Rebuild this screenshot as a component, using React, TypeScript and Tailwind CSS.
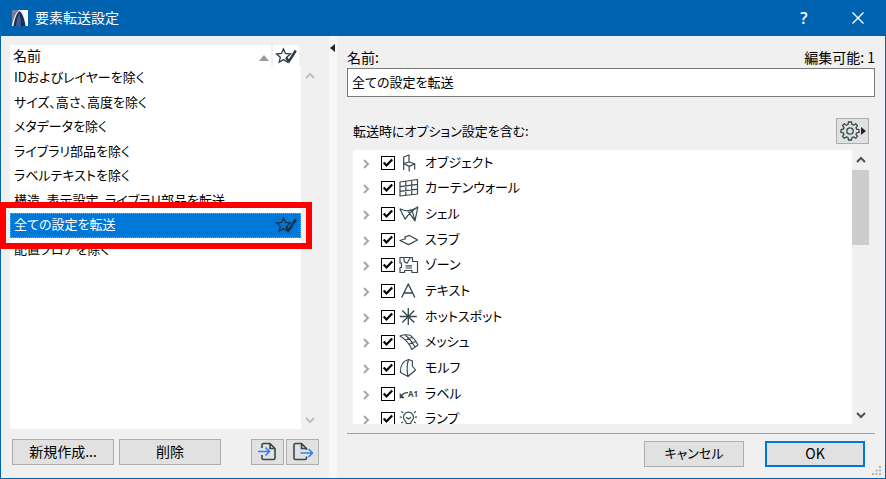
import type { ReactNode } from "react";

const settings = [
  "IDおよびレイヤーを除く",
  "サイズ、高さ、高度を除く",
  "メタデータを除く",
  "ライブラリ部品を除く",
  "ラベルテキストを除く",
  "構造、表示設定、ライブラリ部品を転送",
  "全ての設定を転送",
  "配置フロアを除く",
];

const SELECTED = 6;

const elements: { name: string; icon: ReactNode }[] = [
  {
    name: "オブジェクト",
    icon: (
      <path d="M4.700 10.500V4L10 2V9M4.700 10.500 10 9 15.700 10.800 10.200 13.400ZM4.700 10.500V17M10.200 13.400V18.500M15.700 10.800V16.500" />
    ),
  },
  {
    name: "カーテンウォール",
    icon: <path d="M1 4 18.500 1.500V16L1 18ZM6.800 3.200V17.300M12.700 2.300V16.600M1 8.700 18.500 6.400M1 13.400 18.500 11.200" />,
  },
  {
    name: "シェル",
    icon: <path d="M.8 4.800Q10 9.500 18.800 3L16 16.800 9.500 7.800M.8 4.800 6.200 15.200Q10 8.500 18.800 3M13.200 6.500 16 16.800" />,
  },
  {
    name: "スラブ",
    icon: <path d="M1 10.500 6.500 8.800 5.800 7 10.500 5.400 18.500 10 9.500 14.600Z" />,
  },
  {
    name: "ゾーン",
    icon: (
      <path d="M1 2.500H5V5.500Q5.500 7.500 8 8.200L11.500 2.500H13.500V6.500H18.500V17.500H13V15.500H5.500V17.500H1V12.500H2.500V8H1ZM5 2.500H11.500M6.500 10.800H13M6.500 13H13" />
    ),
  },
  {
    name: "テキスト",
    icon: <path d="M2.700 16.500 9.300 3 15.800 16.500M5 12H13.600" strokeWidth="1.400" />,
  },
  {
    name: "ホットスポット",
    icon: <path d="M.8 9.500H17.800M9.300 1V18M3.300 3.500 15.300 15.500M15.300 3.500 3.300 15.500" strokeWidth="1.300" />,
  },
  {
    name: "メッシュ",
    icon: (
      <path
        d="M1 4Q6 2 11.500 3.300Q17 8 19 13L12.800 17.500Q9.500 9 1 4ZM6 3Q12 7.500 16 15.200M6.500 8.500Q10 5 14.500 6M10 12.500Q13 9.500 17.300 9.700"
        strokeWidth="1.100"
      />
    ),
  },
  {
    name: "モルフ",
    icon: <path d="M9.500 1.500Q1 3.500 1.500 14.500L9 18.500Q7 9 9.500 1.500L13.500 3 13.300 8 16.500 12 9 18.500" />,
  },
  {
    name: "ラベル",
    icon: (
      <>
        <path d="M2 12.500Q4.500 8.500 9 8.700" strokeWidth="1.300" />
        <path d="M.7 14.200V8.800L5.800 14.200Z" fill="currentColor" stroke="none" />
        <text x="9" y="13.200" fontSize="8" fontWeight="700" fill="currentColor" stroke="none">
          A1
        </text>
      </>
    ),
  },
  {
    name: "ランプ",
    icon: (
      <path d="M7.300 14.500Q7.300 12.800 6 11.700A5 5 0 1 1 13 11.700Q11.700 12.800 11.700 14.500ZM7.500 16.800H11.500M7 8.200 9.500 10 12 8.200M.8 8.200H2.800M16 8.200H18M2.300 2.500 4 3.800M16.700 2.500 15 3.800M2.300 14 4 12.800M16.700 14 15 12.800" />
    ),
  },
];

function StarCheck({ className = "" }: { className?: string }) {
  return (
    <svg viewBox="0 0 22 18" className={`h-[18px] w-[22px] ${className}`} fill="none" stroke="currentColor">
      <path d="M8.500 2 10.400 6.500 15.500 7 11.700 10.300 12.700 15.200 8.500 12.600 4.200 15.200 5.300 10.300 1.500 7 6.500 6.500Z" strokeWidth="1.300" />
      <path d="M11 10.500 14 14.200 20.800 3.500" strokeWidth="2.400" />
    </svg>
  );
}

function Chevron({ d, className = "" }: { d: string; className?: string }) {
  return (
    <svg viewBox="0 0 10 10" className={`size-[10px] ${className}`} fill="none" stroke="currentColor" strokeWidth="2">
      <path d={d} />
    </svg>
  );
}

const UP = "M1 7 5 3 9 7";
const DOWN = "M1 3 5 7 9 3";
const RIGHT = "M3 1 7 5 3 9";

const button = "flex items-center justify-center border border-[#adadad] bg-[#e1e1e1]";

export default function App() {
  return (
    <div className="flex h-screen flex-col border border-t-0 border-[#0063b1] bg-[#f0f0f0] font-['Noto_Sans_CJK_JP',sans-serif] text-sm leading-5 text-black [font-feature-settings:'palt']">
      <header className="flex h-9 shrink-0 items-center bg-[#0063b1] pr-[21px] pl-[11px] text-white">
        <svg viewBox="0 0 16 16" className="mr-[7px] size-4">
          <rect width="16" height="16" fill="#f4f6fa" />
          <path d="M0 0H7C3.500 3 1.500 8 0 15Z" fill="#6f7f9f" />
          <path d="M1.500 16C2.500 9 4.500 3 7.500 1C10.500 3 12.500 9 13.500 16Z" fill="#1c2c58" />
          <path d="M4 16C4.500 10 5.500 6 7.300 3.500C8.500 7 9 11 9 16Z" fill="#46598a" />
        </svg>
        <h1 className="pb-[2px]">要素転送設定</h1>
        <button aria-label="ヘルプ" className="mr-10 ml-auto w-4 font-['Open_Sans',sans-serif] text-base font-semibold">
          ?
        </button>
        <button aria-label="閉じる" className="w-3">
          <svg viewBox="0 0 12 12" className="size-3" fill="none" stroke="currentColor" strokeWidth="1.400">
            <path d="M.5.5 11.500 11.500M11.500.5.5 11.500" />
          </svg>
        </button>
      </header>

      <div className="flex min-h-0 flex-1">
        <section className="flex w-[328px] shrink-0 flex-col pt-[9px] pr-[10px] pb-[13px] pl-[9px]">
          <div className="flex min-h-0 flex-1">
            <div className="flex w-[291px] flex-col bg-white">
              <div className="flex h-[21px] shrink-0">
                <div className="flex flex-1 items-center justify-between pr-[2px] pl-[3px]">
                  <span className="pb-[2px]">名前</span>
                  <svg viewBox="0 0 10 6" className="mt-1 h-[6px] w-[10px] text-[#999]">
                    <path d="M0 6 5 0 10 6Z" fill="currentColor" />
                  </svg>
                </div>
                <div className="flex w-[30px] items-center justify-center border-x-2 border-[#f0f0f0] text-[#2b3a42]">
                  <StarCheck />
                </div>
              </div>
              <ul className="grid h-[196px] shrink-0 grid-rows-8 text-[13px]">
                {settings.map((name, i) =>
                  i === SELECTED ? (
                    <li
                      key={name}
                      className="relative flex items-center justify-between border border-dotted border-[#ff8728] bg-[#0078d7] pr-[3px] pl-[3px] text-white"
                    >
                      <span className="pb-[2px]">{name}</span>
                      <StarCheck className="text-[#16324a]" />
                      <span className="absolute -top-3 -right-3 -bottom-3 -left-[11px] border-[6px] border-[#f00]" />
                    </li>
                  ) : (
                    <li key={name} className="flex items-center pb-[2px] pl-1">
                      {name}
                    </li>
                  ),
                )}
              </ul>
            </div>
            <div className="flex flex-1 flex-col items-center justify-between pt-[26px] pb-1 text-[#bfbfbf]">
              <Chevron d={UP} />
              <Chevron d={DOWN} />
            </div>
          </div>
          <div className="mt-[10px] flex h-[26px] shrink-0 gap-[5px] pl-[2px]">
            <button className={`${button} w-[102px] pb-[2px]`}>新規作成...</button>
            <button className={`${button} w-[102px] pb-[2px]`}>削除</button>
            <div className="ml-auto flex gap-[2px]">
              <button aria-label="読み込み" className={`${button} w-[33px]`}>
                <svg viewBox="0 0 20 20" className="size-5" fill="none" strokeWidth="1.600">
                  <path d="M4 6V3Q4 1.500 5.500 1.500H12L17 6.500V16Q17 17.500 15.500 17.500H5.500Q4 17.500 4 16V13M12 1.500V6.500H17" stroke="#37474f" />
                  <path d="M0 9.500H11.500M7.500 5.500 11.500 9.500 7.500 13.500" stroke="#2f80ff" />
                </svg>
              </button>
              <button aria-label="書き出し" className={`${button} w-[33px]`}>
                <svg viewBox="0 0 20 20" className="size-5" fill="none" strokeWidth="1.600">
                  <path d="M13.500 14.500V16Q13.500 17.500 12 17.500H2.500Q1 17.500 1 16V3Q1 1.500 2.500 1.500H8.500L13.500 6.500V8M8.500 1.500V6.500H13.500" stroke="#37474f" />
                  <path d="M7.500 11H19.500M15.500 7 19.500 11 15.500 15" stroke="#2f80ff" />
                </svg>
              </button>
            </div>
          </div>
        </section>

        <div className="w-2 shrink-0 bg-[#f7f7f7]">
          <button aria-label="パネルを折りたたむ" className="mt-2 ml-px flex">
            <svg viewBox="0 0 5 8" className="h-2 w-[5px]">
              <path d="M5 0V8L0 4Z" fill="#222" />
            </svg>
          </button>
        </div>

        <section className="flex min-w-0 flex-1 flex-col pt-3 pr-[10px] pb-[11px] pl-[10px]">
          <div className="flex h-5 shrink-0 items-center justify-between pb-[2px]">
            <label htmlFor="name">名前:</label>
            <span>編集可能: 1</span>
          </div>
          <input
            id="name"
            defaultValue="全ての設定を転送"
            className="h-[29px] w-full shrink-0 border border-[#7a7a7a] bg-white px-1 pb-[2px] text-[13px] outline-none"
          />
          <div className="mt-[21px] flex h-[26px] shrink-0 items-center justify-between pr-[6px] pl-[6px]">
            <h2 className="text-[13px]">転送時にオプション設定を含む:</h2>
            <button aria-label="オプション" className={`${button} h-[26px] w-[33px] gap-px`}>
              <svg viewBox="0 0 20 20" className="size-5" fill="none" stroke="#37474f" strokeWidth="1.300">
                <circle cx="10" cy="10" r="3.200" />
                <path
                  d="M8.500 1H11.500L12 3.500 13.600 4.200 15.700 2.700 17.500 4.600 16 6.600 16.600 8.200 19 8.600V11.400L16.600 11.800 16 13.400 17.500 15.400 15.700 17.300 13.600 15.800 12 16.500 11.500 19H8.500L8 16.500 6.400 15.800 4.300 17.300 2.500 15.400 4 13.400 3.400 11.800 1 11.400V8.600L3.400 8.200 4 6.600 2.500 4.600 4.300 2.700 6.400 4.200 8 3.500Z"
                  strokeLinejoin="round"
                />
              </svg>
              <svg viewBox="0 0 5 8" className="h-2 w-[5px]">
                <path d="M0 0V8L5 4Z" fill="#222" />
              </svg>
            </button>
          </div>
          <div className="mt-[6px] mr-[6px] ml-[6px] flex min-h-0 flex-1">
            <div className="min-w-0 flex-1 overflow-hidden bg-white">
              <ul className="grid h-[282px] auto-rows-fr text-[13px]">
                {elements.map(({ name, icon }) => (
                  <li key={name} className="flex items-center pl-2">
                    <button aria-label={`${name}を展開`} className="mr-[10px] flex text-[#a6a6a6]">
                      <Chevron d={RIGHT} className="mt-[2px]" />
                    </button>
                    <label className="flex items-center">
                      <span className="mr-1 grid">
                        <input
                          type="checkbox"
                          defaultChecked
                          className="peer col-start-1 row-start-1 size-[14px] appearance-none border border-black bg-white"
                        />
                        <svg
                          viewBox="0 0 14 14"
                          className="pointer-events-none invisible col-start-1 row-start-1 size-[14px] peer-checked:visible"
                          fill="none"
                          stroke="#000"
                          strokeWidth="2.200"
                        >
                          <path d="M2.700 6.500 5.500 9.500 11.200 3.500" />
                        </svg>
                      </span>
                      <svg
                        viewBox="0 0 20 20"
                        className="mr-[6px] size-5 font-['Open_Sans',sans-serif] text-[#37474f]"
                        fill="none"
                        stroke="currentColor"
                        strokeWidth="1.200"
                        strokeLinejoin="round"
                      >
                        {icon}
                      </svg>
                      <span className="pb-[2px]">{name}</span>
                    </label>
                  </li>
                ))}
              </ul>
            </div>
            <div className="flex w-[17px] flex-col items-center">
              <Chevron d={UP} className="my-[5px] shrink-0 text-[#505050]" />
              <div className="h-[75px] w-full bg-[#cdcdcd]" />
              <Chevron d={DOWN} className="mt-auto mb-1 text-[#505050]" />
            </div>
          </div>
          <hr className="mt-[9px] border-t border-[#a0a4a4]" />
          <div className="mt-[7px] flex h-[26px] shrink-0 justify-end gap-[21px] pr-[10px]">
            <button className={`${button} w-[100px] pb-[2px] text-[13px]`}>キャンセル</button>
            <button className="flex w-[100px] items-center justify-center border-2 border-[#0078d7] bg-[#e1e1e1] pb-[2px]">
              OK
            </button>
          </div>
        </section>
      </div>

      <svg viewBox="0 0 10 10" className="absolute right-1 bottom-[3px] size-[10px]" fill="#b4b4b4">
        <path d="M7 0H9V2H7ZM7 3.500H9V5.500H7ZM7 7H9V9H7ZM3.500 3.500H5.500V5.500H3.500ZM3.500 7H5.500V9H3.500ZM0 7H2V9H0Z" />
      </svg>
    </div>
  );
}
